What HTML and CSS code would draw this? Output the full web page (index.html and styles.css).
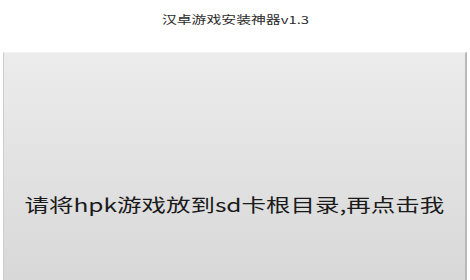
FILE: index.html
```html
<!DOCTYPE html>
<html lang="zh-CN">
<head>
    <meta charset="UTF-8">
    <meta name="viewport" content="width=device-width, initial-scale=1.0">
    <title>汉卓游戏安装神器</title>
    <link rel="stylesheet" href="styles.css">
</head>
<body>
    <!-- 标题栏 -->
    <div class="header">
        <span class="title">汉卓游戏安装神器v1.3</span>
    </div>

    <!-- 安装按钮 -->
    <div class="install-btn">
        <span class="btn-text">请将hpk游戏放到sd卡根目录,再点击我</span>
    </div>
</body>
</html>
```

FILE: styles.css
```css
/* 全局样式 */
* {
    margin: 0;
    padding: 0;
    box-sizing: border-box;
    font-family: 'Noto Sans CJK SC', 'Liberation Sans', sans-serif;
}

body {
    height: 100vh;
    overflow: hidden;
    background: #fff;
}

/* 标题栏 */
.header {
    height: 52px;
    display: flex;
    justify-content: center;
    padding-top: 13px;
}

.title {
    display: inline-block;
    font-size: 11px;
    line-height: 12px;
    color: #2b2b2b;
    transform: scaleX(1.35);
}

/* 安装按钮 */
.install-btn {
    height: calc(100vh - 52px);
    margin: 0 3px;
    display: flex;
    justify-content: center;
    align-items: flex-start;
    padding-top: 141px;
    background: linear-gradient(#ececec, #d8d8d8);
    border-top: 1px solid #f4f4f4;
    border-left: 1px solid #cdcdcd;
    border-right: 2px solid #b9b9b9;
}

.btn-text {
    display: inline-block;
    font-size: 18px;
    line-height: 20px;
    color: #1a1a1a;
    transform: scaleX(1.36);
    white-space: nowrap;
}
```
